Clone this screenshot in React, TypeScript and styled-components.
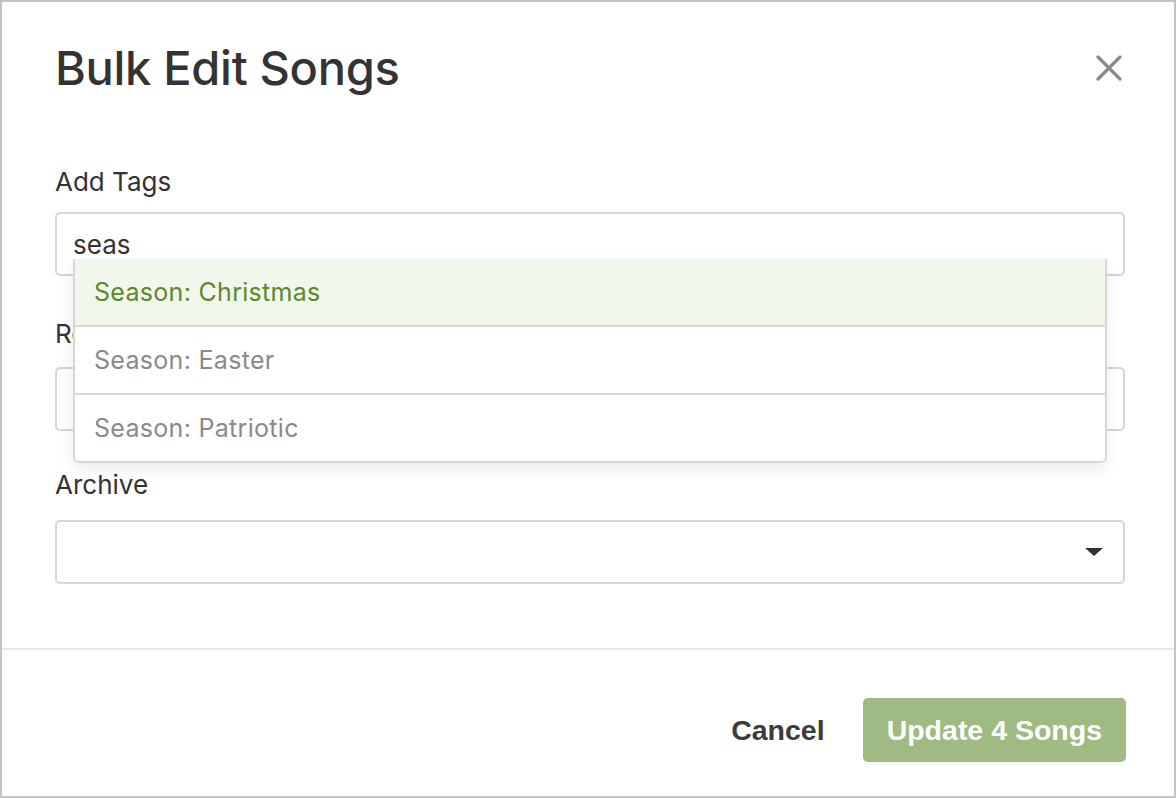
import React from "react";
import styled, { createGlobalStyle } from "styled-components";

const Global = createGlobalStyle`
  html, body { margin: 0; padding: 0; background: #fff; }
  * { box-sizing: border-box; }
`;

const Modal = styled.div`
  width: 1176px;
  height: 798px;
  border: 2px solid #c4c4c4;
  display: flex;
  flex-direction: column;
  font-family: Inter, "Noto Sans", sans-serif;
  color: #333;
  background: #fff;
`;

const Header = styled.div`
  display: flex;
  align-items: center;
  justify-content: space-between;
  padding: 28px 52px 0 53px;
  height: 104px;
`;

const Title = styled.h1`
  margin: 0;
  font-size: 47px;
  font-weight: 500;
  line-height: 58px;
  color: #333;
  letter-spacing: -0.3px;
`;

const CloseButton = styled.button`
  border: 0;
  background: none;
  padding: 0;
  width: 26px;
  height: 26px;
  display: flex;
  align-items: center;
  justify-content: center;
  cursor: pointer;
`;

const Body = styled.div`
  flex: 1;
  padding: 0 49px 0 53px;
`;

const Field = styled.div<{ $top: number; $gap: number }>`
  margin-top: ${(p) => p.$top}px;
  display: flex;
  flex-direction: column;
  gap: ${(p) => p.$gap}px;
`;

const Label = styled.label`
  font-size: 26px;
  line-height: 30px;
  color: #333;
`;

const InputWrap = styled.div`
  position: relative;
`;

const Input = styled.div`
  height: 64px;
  border: 2px solid #d6d6d6;
  border-radius: 5px;
  padding: 0 16px;
  display: flex;
  align-items: center;
  justify-content: space-between;
  font-size: 26px;
  color: #333;
  background: #fff;
`;

const Caret = styled.span`
  width: 0;
  height: 0;
  border-left: 9px solid transparent;
  border-right: 9px solid transparent;
  border-top: 8px solid #333;
  margin-right: 4px;
`;

const Menu = styled.ul`
  position: absolute;
  top: 47px;
  left: 18px;
  right: 18px;
  margin: 0;
  padding: 0;
  list-style: none;
  background: #fff;
  border: 2px solid #d8d8d2;
  border-top: 0;
  border-radius: 0 0 6px 6px;
  box-shadow: 0 6px 16px rgba(0, 0, 0, 0.08);
  z-index: 2;
  overflow: hidden;
`;

const Option = styled.li<{ $active?: boolean }>`
  height: 68px;
  padding: 0 19px;
  display: flex;
  align-items: center;
  font-size: 25px;
  letter-spacing: 0.3px;
  color: ${(p) => (p.$active ? "#5a8a2c" : "#8a8a8a")};
  background: ${(p) => (p.$active ? "#f2f7ed" : "#fff")};
  border-bottom: 2px solid #d8d8d2;
  &:last-child {
    border-bottom: 0;
    height: 66px;
  }
`;

const Footer = styled.div`
  border-top: 2px solid #e6e6e6;
  height: 148px;
  display: flex;
  align-items: center;
  justify-content: flex-end;
  gap: 38px;
  padding: 14px 48px 0 0;
`;

const Button = styled.button<{ $primary?: boolean }>`
  font-family: "Liberation Sans", Arial, sans-serif;
  font-weight: 700;
  font-size: 28.5px;
  height: 64px;
  border: 0;
  border-radius: 5px;
  padding: ${(p) => (p.$primary ? "0 24px" : "0")};
  background: ${(p) => (p.$primary ? "#a0ba84" : "transparent")};
  color: ${(p) => (p.$primary ? "#fff" : "#3c3c3c")};
  cursor: pointer;
`;

export default function App() {
  return (
    <Modal>
      <Global />
      <Header>
        <Title>Bulk Edit Songs</Title>
        <CloseButton aria-label="Close">
          <svg width="26" height="26" viewBox="0 0 26 26">
            <path
              d="M2 2 L24 24 M24 2 L2 24"
              stroke="#8a8a8a"
              strokeWidth="3.2"
              strokeLinecap="round"
            />
          </svg>
        </CloseButton>
      </Header>
      <Body>
        <Field $top={61} $gap={15}>
          <Label>Add Tags</Label>
          <InputWrap>
            <Input>seas</Input>
            <Menu>
              <Option $active>Season: Christmas</Option>
              <Option>Season: Easter</Option>
              <Option>Season: Patriotic</Option>
            </Menu>
          </InputWrap>
        </Field>
        <Field $top={43} $gap={18}>
          <Label>Remove Tags</Label>
          <InputWrap>
            <Input />
          </InputWrap>
        </Field>
        <Field $top={39} $gap={20}>
          <Label>Archive</Label>
          <InputWrap>
            <Input>
              <span />
              <Caret />
            </Input>
          </InputWrap>
        </Field>
      </Body>
      <Footer>
        <Button>Cancel</Button>
        <Button $primary>Update 4 Songs</Button>
      </Footer>
    </Modal>
  );
}
